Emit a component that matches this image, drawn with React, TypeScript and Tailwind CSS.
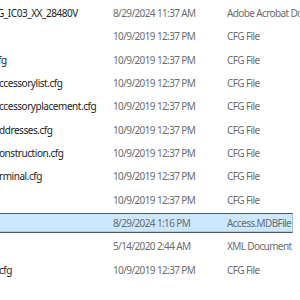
import React from 'react';

type FileRow = {
  name: string;
  nameShift: string;
  modified: string;
  kind: string;
  selected?: boolean;
};

// Filas visibles de la vista "Detalles" (la columna de nombre viene recortada por la izquierda)
const rows: FileRow[] = [
  { name: 'G_IC03_XX_28480V', nameShift: '-ml-[3px]', modified: '8/29/2024 11:37 AM', kind: 'Adobe Acrobat Document' },
  { name: '', nameShift: '', modified: '10/9/2019 12:37 PM', kind: 'CFG File' },
  { name: 'fg', nameShift: '-ml-[2px]', modified: '10/9/2019 12:37 PM', kind: 'CFG File' },
  { name: 'ccessorylist.cfg', nameShift: '-ml-[1px]', modified: '10/9/2019 12:37 PM', kind: 'CFG File' },
  { name: 'ccessoryplacement.cfg', nameShift: '-ml-[1px]', modified: '10/9/2019 12:37 PM', kind: 'CFG File' },
  { name: 'ddresses.cfg', nameShift: '-ml-[1px]', modified: '10/9/2019 12:37 PM', kind: 'CFG File' },
  { name: 'onstruction.cfg', nameShift: '-ml-[1px]', modified: '10/9/2019 12:37 PM', kind: 'CFG File' },
  { name: 'rminal.cfg', nameShift: '-ml-[1px]', modified: '10/9/2019 12:37 PM', kind: 'CFG File' },
  { name: '', nameShift: '', modified: '10/9/2019 12:37 PM', kind: 'CFG File' },
  { name: '', nameShift: '', modified: '8/29/2024 1:16 PM', kind: 'Access.MDBFile', selected: true },
  { name: '', nameShift: '', modified: '5/14/2020 2:44 AM', kind: 'XML Document' },
  { name: 'cfg', nameShift: '-ml-[1px]', modified: '10/9/2019 12:37 PM', kind: 'CFG File' },
];

function Row({ row }: { row: FileRow }) {
  return (
    <div className="h-[23.333px] flex items-center">
      <div
        className={
          row.selected
            ? 'h-[20px] w-[293px] flex items-center bg-[#cce8ff] border-y border-r border-y-[#4d5662] border-r-[#99c4e4] shadow-[inset_0_-1px_0_#a9cfee]'
            : 'h-[20px] w-[293px] flex items-center border-y border-r border-transparent'
        }
      >
        <div className="w-[113px] shrink-0 overflow-hidden whitespace-nowrap text-[#1b1b1b] tracking-[-0.45px]">
          <span className={'inline-block ' + row.nameShift}>{row.name}</span>
        </div>
        <div className="w-[114px] shrink-0 whitespace-nowrap text-[#6d6d6d]">{row.modified}</div>
        <div className="shrink-0 whitespace-nowrap text-[#6d6d6d]">{row.kind}</div>
      </div>
    </div>
  );
}

export default function App() {
  return (
    <div
      className="w-[300px] h-[300px] overflow-hidden bg-white text-[10px] leading-[14px] tracking-[-0.62px]"
      style={{ fontFamily: '"Noto Sans", "Open Sans", sans-serif' }}
    >
      <div className="pt-[1.333px] flex flex-col">
        {rows.map((r, i) => (
          <Row key={i} row={r} />
        ))}
      </div>
    </div>
  );
}
